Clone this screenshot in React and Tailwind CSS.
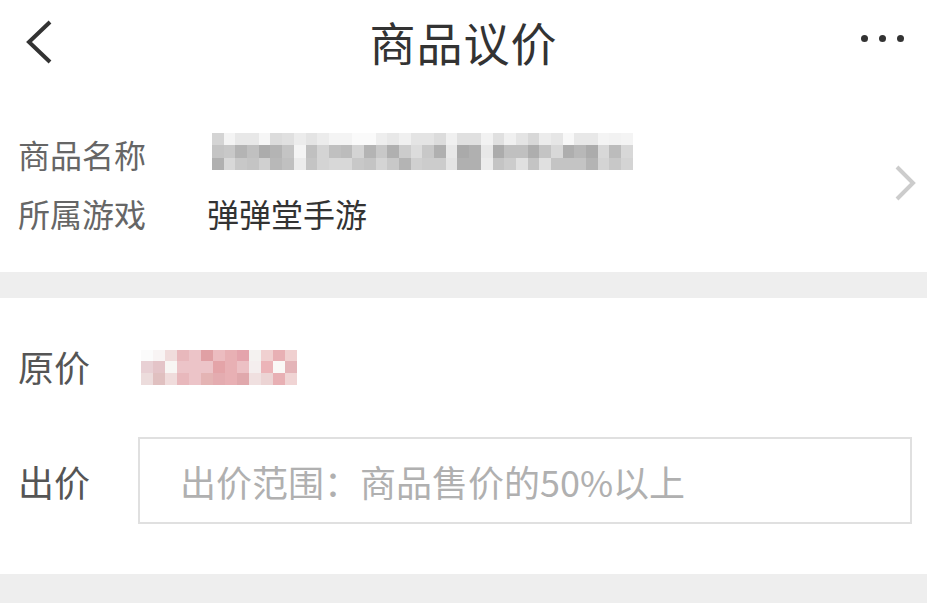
import React from "react";

// Mosaic data (blurred name / price in the screenshot)
const nameRows = [
  "d4 f4 e8 e8 f6 dc e0 ec e4 ec f4 f4 fa fa ee e8 f0 e4 e4 dc f0 e0 e0 f2 e0 f0 e4 d8 ec e6 f8 e8 e8 f4 f2 f4",
  "c4 c8 b4 c0 ac b4 c4 f4 c0 d4 c0 bc d4 b4 c8 b0 cc dc c8 b0 e8 aa b0 e8 ac c0 c0 ae c4 d8 ae b8 ac d8 bc d8",
  "b0 d8 c8 c4 d0 b8 c0 ec c4 d4 d8 d8 c8 c4 d4 c8 b4 d0 cc cc e4 b0 b0 ec c4 cc e0 c4 e0 c4 c4 c4 b4 d4 c8 d4",
].map((r) => r.split(" ").map((v) => `#${v}${v}${v}`));

const priceRows = [
  ["#fbfbfb", "#f8f4f4", "#f0dcdc", "#e8b8bc", "#ecc4c8", "#e0a0a4", "#ecbcc0", "#e8b0b4", "#e4a4ac", "#f4f2f0", "#f0d0d0", "#e8b0b4", "#f0d0d0"],
  ["#e8d0d4", "#e4c4c8", "#f8f6f4", "#ecc4c8", "#ecc4c8", "#ecc4c8", "#e4a4a8", "#e8b0b4", "#ecc0c4", "#f4eeee", "#ecb4b8", "#faf8f6", "#e4b4b8"],
  ["#ecdcdc", "#e0c0c0", "#f0dcdc", "#e8b8bc", "#ecc4c8", "#e4b4b4", "#e4acb0", "#e8b0b4", "#e0a8ac", "#f0e0e0", "#ecd4d4", "#e8b0b4", "#f0d4d4"],
];

const Mosaic = ({ rows, className }) => (
  <div className={`flex flex-col ${className}`}>
    {rows.map((row, i) => (
      <div key={i} className="flex flex-1">
        {row.map((c, j) => (
          <div key={j} className="flex-1" style={{ backgroundColor: c }} />
        ))}
      </div>
    ))}
  </div>
);

export default function App() {
  return (
    <div className="w-[927px] h-[603px] bg-white overflow-hidden flex flex-col font-['Noto_Sans_CJK_SC','Noto_Sans',sans-serif]">
      {/* Header */}
      <header className="h-[82px] shrink-0 grid grid-cols-[1fr_auto_1fr] items-center">
        <div className="pl-[24px] pt-[2px]">
          <svg width="30" height="46" viewBox="0 0 30 46" fill="none">
            <path d="M26 3 L5 23 L26 43" stroke="#333" strokeWidth="4" strokeLinejoin="miter" />
          </svg>
        </div>
        <h1 className="text-[46px] leading-[82px] text-[#333] tracking-[1px]">商品议价</h1>
        <div className="flex justify-end pr-[23px] gap-[11px] pb-[6px]">
          <span className="w-[7px] h-[7px] rounded-full bg-[#333]" />
          <span className="w-[7px] h-[7px] rounded-full bg-[#333]" />
          <span className="w-[7px] h-[7px] rounded-full bg-[#333]" />
        </div>
      </header>

      {/* Goods info */}
      <section className="h-[190px] shrink-0 flex items-center pl-[18px] pr-[11px] pt-[12px]">
        <div className="flex-1 flex flex-col gap-[15px]">
          <div className="flex items-center h-[44px]">
            <span className="w-[194px] text-[32px] leading-[44px] text-[#666]">商品名称</span>
            <Mosaic rows={nameRows} className="w-[421px] h-[37px] -mt-[4px]" />
          </div>
          <div className="flex items-center h-[44px]">
            <span className="w-[189px] text-[32px] leading-[44px] text-[#666]">所属游戏</span>
            <span className="text-[32px] leading-[44px] text-[#333]">弹弹堂手游</span>
          </div>
        </div>
        <svg width="22" height="36" viewBox="0 0 22 36" fill="none">
          <path d="M3 2 L19 18 L3 34" stroke="#cccccc" strokeWidth="4" />
        </svg>
      </section>

      <div className="h-[26px] shrink-0 bg-[#eeeeee]" />

      {/* Bid */}
      <section className="h-[276px] shrink-0 flex flex-col pl-[18px] pr-[15px] pt-[38px]">
        <div className="flex items-center h-[60px]">
          <span className="w-[123px] text-[36px] leading-[60px] text-[#555]">原价</span>
          <Mosaic rows={priceRows} className="w-[156px] h-[35px] mt-[2px]" />
        </div>
        <div className="flex items-center mt-[41px]">
          <span className="w-[120px] text-[36px] leading-[60px] text-[#555]">出价</span>
          <input
            className="flex-1 h-[87px] border-2 border-[#e0e0e0] pl-[40px] text-[36px] text-[#333] outline-none placeholder:text-[#b0b0b0] font-['Noto_Sans_CJK_SC','Noto_Sans',sans-serif]"
            placeholder="出价范围：商品售价的50%以上"
          />
        </div>
      </section>

      <div className="flex-1 bg-[#eeeeee]" />
    </div>
  );
}
